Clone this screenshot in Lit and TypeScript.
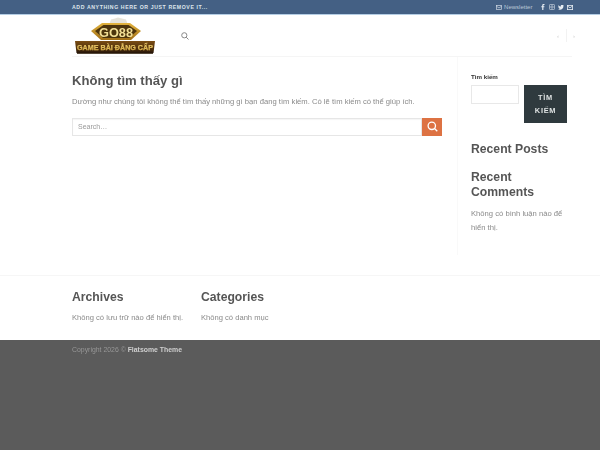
import { LitElement, html, css } from "lit";
import { customElement } from "lit/decorators.js";

@customElement("app-root")
export class AppRoot extends LitElement {
  static styles = css`
    :host { display: block; width: 600px; height: 450px; overflow: hidden; background: #fff; font-family: "Liberation Sans", Arial, sans-serif; color: #777; }
    .page { display: flex; flex-direction: column; height: 450px; filter: blur(0.45px); }
    .wrap { width: 500px; margin-left: 72px; }
    .top { height: 14px; background: #446084; border-bottom: 1px solid #b4cde4; flex: none; }
    .top .wrap { height: 14px; display: flex; align-items: center; justify-content: space-between; }
    .promo { font-size: 5.2px; font-weight: 700; letter-spacing: 0.6px; color: #dfe5ec; text-transform: uppercase; }
    .topr { display: flex; align-items: center; color: #dbe3ec; margin-right: -1px; }
    .news { font-size: 6px; color: #b9c7d6; margin: 0 9px 0 2px; }
    .topr svg { display: block; }
    .soc { display: flex; gap: 3.2px; align-items: center; }
    .head { height: 42px; flex: none; display: flex; }
    .head .wrap { height: 42px; display: flex; align-items: center; border-bottom: 1px solid #f5f5f5; box-sizing: border-box; }
    .logo { display: block; margin-left: 1px; }
    .searchi { margin-left: 24px; }
    .nav { margin-left: auto; display: flex; align-items: center; font-size: 6px; color: #ccc; margin-right: -3px; }
    .nav .sep { width: 1px; height: 13px; background: #f2f2f2; margin: 0 6.5px; }
    .main { display: flex; height: 218px; flex: none; }
    .cols { display: flex; }
    .left { width: 370px; padding-top: 15px; }
    h1 { margin: 0; font-size: 13.1px; line-height: 18px; color: #555; font-weight: 700; }
    .left p { margin: 5.5px 0 0; font-size: 7.65px; line-height: 12px; color: #8a8a8a; }
    .sf { display: flex; margin-top: 10px; height: 18px; }
    .sf .in { flex: 1; border: 1px solid #e6e6e6; box-shadow: inset 0 1px 1px rgba(0,0,0,.04); box-sizing: border-box; font-size: 7px; color: #999; padding-left: 5px; line-height: 16px; }
    .sf .btn { width: 20px; background: #dd7243; display: flex; align-items: center; justify-content: center; }
    .side { width: 115px; margin-left: 15px; border-left: 1px solid #f9f9f9; padding: 16px 0 0 13px; box-sizing: border-box; height: 198px; }
    .side .lbl { font-size: 6.2px; font-weight: 700; color: #333; line-height: 8px; }
    .srow { display: flex; margin-top: 4px; }
    .srow .inp { width: 48px; height: 19px; border: 1px solid #e8e8e8; box-sizing: border-box; }
    .srow .go { width: 43px; height: 38px; margin-left: 5px; background: #2f3a3e; color: #dfe3e3; font-size: 7.4px; font-weight: 700; letter-spacing: .7px; line-height: 13.5px; text-align: center; display: flex; align-items: center; justify-content: center; }
    h3 { margin: 0; font-size: 12.2px; line-height: 15.5px; font-weight: 700; color: #555; }
    .rp { margin-top: 19px; }
    .rc { margin-top: 12px; }
    .side p { margin: 6px 0 0; font-size: 7.65px; line-height: 14.5px; color: #8a8a8a; }
    .fw { height: 65px; flex: none; border-top: 1px solid #f6f6f6; box-sizing: border-box; }
    .fw .wrap { display: flex; padding-top: 14px; }
    .fw .col { width: 129px; }
    .fw p { margin: 6px 0 0; font-size: 7.6px; line-height: 12px; color: #8a8a8a; }
    .foot { flex: 1; background: #5b5b5b; }
    .foot .wrap { padding-top: 6px; font-size: 6.9px; line-height: 8px; color: #979797; }
    .foot b { color: #cfcfcf; font-weight: 700; }
  `;

  logo() {
    return html`<svg class="logo" width="84" height="40" viewBox="0 0 84 40">
      <defs>
        <linearGradient id="g" x1="0" y1="0" x2="0" y2="1"><stop offset="0" stop-color="#f7e08a"/><stop offset="1" stop-color="#c79226"/></linearGradient>
        <linearGradient id="b" x1="0" y1="0" x2="0" y2="1"><stop offset="0" stop-color="#7a4d14"/><stop offset=".7" stop-color="#4a2c0a"/><stop offset="1" stop-color="#24140a"/></linearGradient>
        <linearGradient id="d" x1="0" y1="0" x2="0" y2="1"><stop offset="0" stop-color="#e2b33e"/><stop offset="1" stop-color="#a06e16"/></linearGradient>
      </defs>
      <path d="M36 9 L38 3.500 L42 2.500 L45 1.500 L49 2.500 L53 3.500 L55 9 Z" fill="#d8d4c6" opacity=".65"/>
      <path d="M18 15 L29 7 H57 L68 15 L58 24 H28 Z" fill="url(#d)"/>
      <path d="M22 15 L30.500 9 H55.500 L64 15 L56 22 H30 Z" fill="#4c340c"/>
      <text x="26" y="20.500" font-family="Liberation Sans" font-size="13" font-weight="700" fill="#f2df95" textLength="34" lengthAdjust="spacingAndGlyphs">GO88</text>
      <path d="M2 25 H82 L80.500 37 H3.500 Z" fill="url(#b)"/>
      <rect x="4" y="36.500" width="76" height="1.500" fill="#2a1a08" opacity=".8"/>
      <text x="4" y="33.500" font-family="Liberation Sans" font-size="7.200" font-weight="700" fill="url(#g)" stroke="#e9c767" stroke-width=".25" textLength="76" lengthAdjust="spacingAndGlyphs">GAME BÀI ĐẲNG CẤP</text>
    </svg>`;
  }

  render() {
    return html`<div class="page">
      <div class="top"><div class="wrap">
        <div class="promo">Add anything here or just remove it...</div>
        <div class="topr">
          <svg width="6" height="5" viewBox="0 0 6 5" fill="none" stroke="#cfd9e4" stroke-width=".7"><rect x=".4" y=".4" width="5.2" height="4.2"/><path d="M.4 1.2 L3 3 L5.6 1.2"/></svg>
          <span class="news">Newsletter</span>
          <div class="soc">
            <svg width="4" height="6" viewBox="0 0 4 6" fill="#e6ecf2"><path d="M1.2 6V3.3H.3V2.2h.9V1.4C1.2.5 1.8 0 2.6 0h.9v1.1h-.6c-.4 0-.5.2-.5.5v.6h1L3.3 3.3h-.9V6Z"/></svg>
            <svg width="6" height="6" viewBox="0 0 6 6" fill="none" stroke="#d5deE8" stroke-width=".7"><rect x=".4" y=".4" width="5.2" height="5.2" rx="1.2"/><circle cx="3" cy="3" r="1.2"/></svg>
            <svg width="6" height="5" viewBox="0 0 6 5" fill="#e6ecf2"><path d="M6 .6l-.7.2.6-.7-.7.3A1.2 1.2 0 0 0 3 1.5C2 1.4 1.100 1 .4.2.1.8.2 1.400.7 1.800L.2 1.700c0 .6.4 1 1 1.200H.7c.1.500.5.800 1.100.900C1.300 4.200.700 4.400 0 4.300 2.700 5.700 5.400 4 5.400 1.200Z"/></svg>
            <svg width="6" height="5" viewBox="0 0 6 5" fill="none" stroke="#e6ecf2" stroke-width=".8"><rect x=".4" y=".4" width="5.200" height="4.200"/><path d="M.4 1 L3 2.800 L5.600 1"/></svg>
          </div>
        </div>
      </div></div>

      <div class="head"><div class="wrap">
        ${this.logo()}
        <svg class="searchi" width="8" height="8" viewBox="0 0 8 8" fill="none" stroke="#888" stroke-width="1"><circle cx="3.300" cy="3.300" r="2.600"/><path d="M5.200 5.200 L7.500 7.500"/></svg>
        <div class="nav"><span>‹</span><span class="sep"></span><span>›</span></div>
      </div></div>

      <div class="main"><div class="wrap cols">
        <div class="left">
          <h1>Không tìm thấy gì</h1>
          <p>Dường như chúng tôi không thể tìm thấy những gì bạn đang tìm kiếm. Có lẽ tìm kiếm có thể giúp ích.</p>
          <div class="sf">
            <div class="in">Search…</div>
            <div class="btn"><svg width="11" height="11" viewBox="0 0 11 11" fill="none" stroke="#fff" stroke-width="1.300"><circle cx="4.800" cy="4.800" r="3.700"/><path d="M7.500 7.500 L10.300 10.300"/></svg></div>
          </div>
        </div>
        <div class="side">
          <div class="lbl">Tìm kiếm</div>
          <div class="srow"><div class="inp"></div><div class="go"><span>TÌM<br>KIẾM</span></div></div>
          <h3 class="rp">Recent Posts</h3>
          <h3 class="rc">Recent<br>Comments</h3>
          <p>Không có bình luận nào để<br>hiển thị.</p>
        </div>
      </div></div>

      <div class="fw"><div class="wrap">
        <div class="col"><h3>Archives</h3><p>Không có lưu trữ nào để hiển thị.</p></div>
        <div class="col"><h3>Categories</h3><p>Không có danh mục</p></div>
      </div></div>

      <div class="foot"><div class="wrap">Copyright 2026 © <b>Flatsome Theme</b></div></div>
    </div>`;
  }
}
